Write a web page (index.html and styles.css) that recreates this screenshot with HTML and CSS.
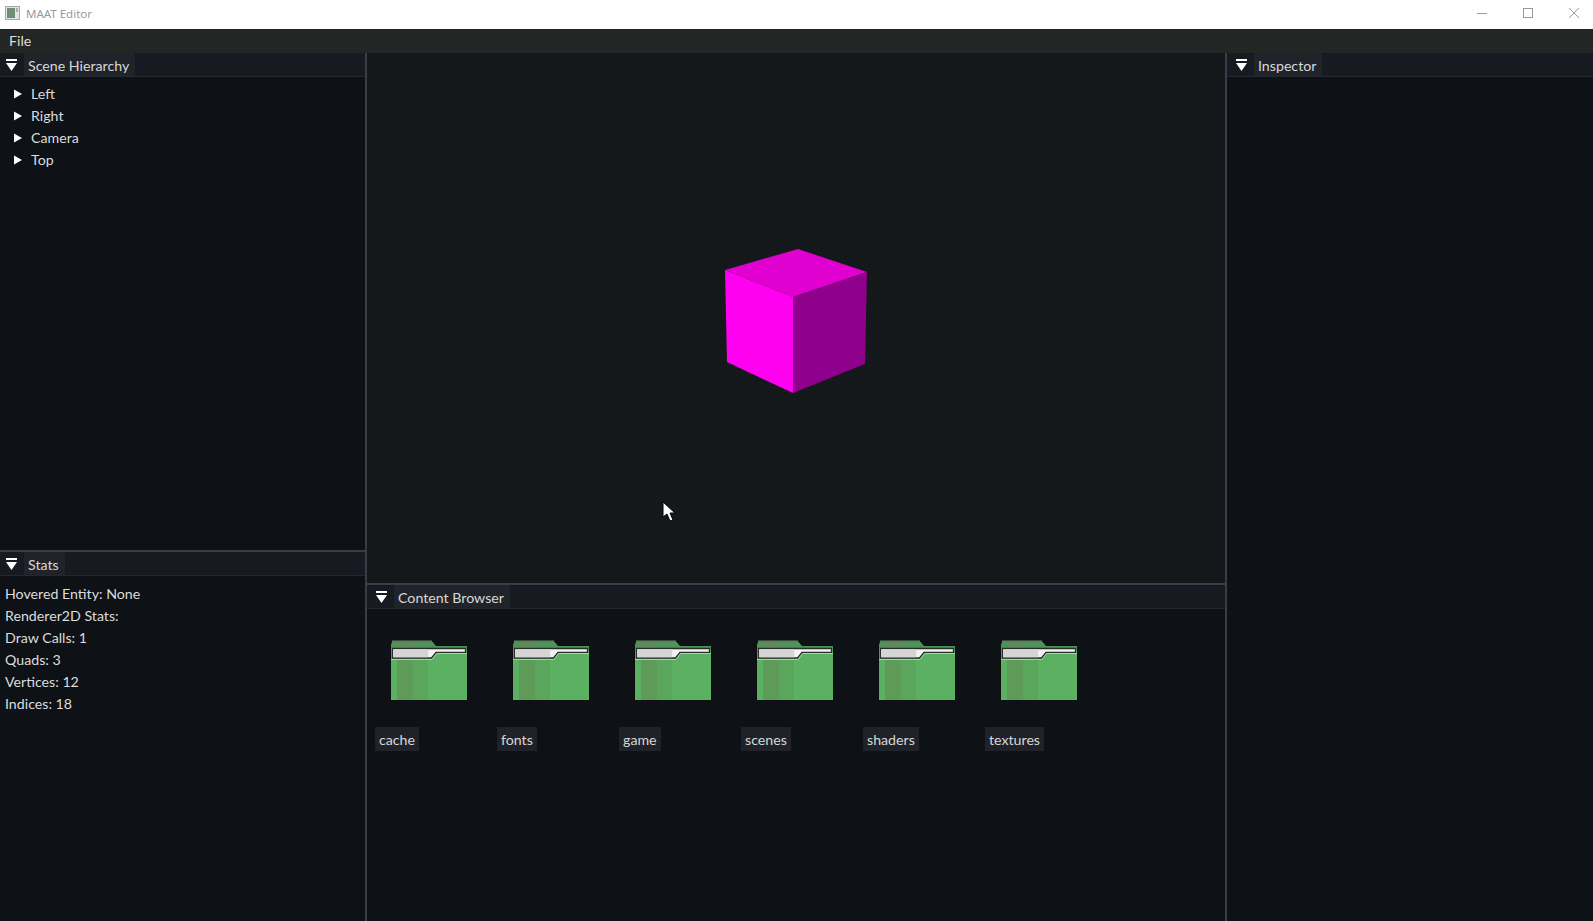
FILE: index.html
```html
<!DOCTYPE html>
<html lang="en">
<head>
  <meta charset="UTF-8">
  <title>MAAT Editor</title>
  <link rel="stylesheet" href="styles.css">
</head>
<body>

<svg class="defs">
  <defs>
    <symbol id="dock-arrow" viewBox="0 0 11 12">
      <rect x="0" y="0" width="11" height="2" fill="#fff"/>
      <polygon points="0,4 11,4 5.5,12" fill="#fff"/>
    </symbol>
    <symbol id="tree-arrow" viewBox="0 0 8 10">
      <polygon points="0,0.5 8,5 0,9.5" fill="#fff"/>
    </symbol>
    <symbol id="folder" viewBox="0 0 78 61">
      <path d="M0.5 60.5 V6 L2 1 H42 L46 6 H76 L77.5 8 V60.5 Z" fill="#5cb062" stroke="#0b0d0f"/>
      <path d="M2 1.5 H42 L46 6 H77 V9 H1 V6 Z" fill="#4f9456"/>
      <path d="M2 1 H42" stroke="#6d8a72" fill="none"/>
      <rect x="7" y="2" width="16" height="6" fill="#5f8a58"/>
      <rect x="7" y="20" width="16" height="40" fill="#5f9b58"/>
      <rect x="23" y="20" width="15" height="40" fill="#5aa65c"/>
      <path d="M2.5 8.5 H75.5 V12.5 H46 L41.5 18 H2.5 Z" fill="#f2f2f2" stroke="#262e29" stroke-width="1.3"/>
      <rect x="3.2" y="9.2" width="35" height="8.1" fill="#d6d4d7"/>
      <path d="M1 19.5 H42 L46.5 13.5 H77" fill="none" stroke="#a9d3ab"/>
    </symbol>
  </defs>
</svg>

<div class="titlebar">
  <svg class="app-icon" width="15" height="14" viewBox="0 0 15 14">
    <rect x="0.5" y="0.5" width="14" height="13" fill="#e4e4e4" stroke="#a8a8a8"/>
    <rect x="2" y="2" width="8" height="10" fill="#6f8f78"/>
    <rect x="11" y="2" width="2" height="4" fill="#a9adaa"/>
  </svg>
  <span class="app-name">MAAT Editor</span>
  <div class="win-controls">
    <svg width="12" height="12" viewBox="0 0 12 12"><path d="M1 6.5 H11" stroke="#9a9a9a"/></svg>
    <svg width="12" height="12" viewBox="0 0 12 12"><rect x="1.5" y="1.5" width="9" height="9" fill="none" stroke="#9a9a9a"/></svg>
    <svg width="12" height="12" viewBox="0 0 12 12"><path d="M1 1 L11 11 M11 1 L1 11" stroke="#9a9a9a"/></svg>
  </div>
</div>

<div class="menubar"><span class="menu-item">File</span></div>

<div class="workspace">
  <div class="col-left">
    <section class="panel scene-panel">
      <div class="panel-head">
        <svg class="dock-arrow"><use href="#dock-arrow"/></svg>
        <span class="tab">Scene Hierarchy</span>
      </div>
      <ul class="tree">
        <li><svg class="tree-arrow"><use href="#tree-arrow"/></svg>Left</li>
        <li><svg class="tree-arrow"><use href="#tree-arrow"/></svg>Right</li>
        <li><svg class="tree-arrow"><use href="#tree-arrow"/></svg>Camera</li>
        <li><svg class="tree-arrow"><use href="#tree-arrow"/></svg>Top</li>
      </ul>
    </section>
    <section class="panel stats-panel">
      <div class="panel-head">
        <svg class="dock-arrow"><use href="#dock-arrow"/></svg>
        <span class="tab">Stats</span>
      </div>
      <div class="stats">
        <p>Hovered Entity: None</p>
        <p>Renderer2D Stats:</p>
        <p>Draw Calls: 1</p>
        <p>Quads: 3</p>
        <p>Vertices: 12</p>
        <p>Indices: 18</p>
      </div>
    </section>
  </div>

  <div class="col-center">
    <div class="viewport">
      <svg class="scene" viewBox="0 0 858 530" width="858" height="530">
        <polygon points="431,196 358,217 426,244 500,219" fill="#e000d0"/>
        <polygon points="358,217 426,244 426,340 360,309" fill="#ff00f0"/>
        <polygon points="426,244 500,219 498,311 426,340" fill="#8f008c"/>
        <path d="M296 449 V464 L300 461 L303 468 L306 467 L303 460 L308 460 Z" fill="#fff" stroke="#000" stroke-width="1"/>
      </svg>
    </div>
    <section class="panel browser-panel">
      <div class="panel-head wide">
        <svg class="dock-arrow"><use href="#dock-arrow"/></svg>
        <span class="tab">Content Browser</span>
      </div>
      <div class="file-grid">
        <div class="file"><svg class="folder"><use href="#folder"/></svg><span class="file-name">cache</span></div>
        <div class="file"><svg class="folder"><use href="#folder"/></svg><span class="file-name">fonts</span></div>
        <div class="file"><svg class="folder"><use href="#folder"/></svg><span class="file-name">game</span></div>
        <div class="file"><svg class="folder"><use href="#folder"/></svg><span class="file-name">scenes</span></div>
        <div class="file"><svg class="folder"><use href="#folder"/></svg><span class="file-name">shaders</span></div>
        <div class="file"><svg class="folder"><use href="#folder"/></svg><span class="file-name">textures</span></div>
      </div>
    </section>
  </div>

  <div class="col-right">
    <section class="panel inspector-panel">
      <div class="panel-head wide">
        <svg class="dock-arrow"><use href="#dock-arrow"/></svg>
        <span class="tab">Inspector</span>
      </div>
    </section>
  </div>
</div>

</body>
</html>
```

FILE: styles.css
```css
* {
  box-sizing: border-box;
}
html, body {
  height: 100%;
}
body {
  margin: 0;
  display: flex;
  flex-direction: column;
  overflow: hidden;
  background: #0e1116;
  font-family: "Lato", sans-serif;
  font-size: 14.2px;
  color: #dcdcdc;
}
.defs {
  display: none;
}
.titlebar {
  height: 29px;
  flex: none;
  display: flex;
  align-items: center;
  padding-left: 5px;
  background: #fff;
}
.app-icon {
  margin-right: 6px;
  margin-top: -3px;
}
.app-name {
  font-family: "Noto Sans", sans-serif;
  font-size: 11.5px;
  color: #999;
  margin-top: -2px;
}
.win-controls {
  margin-left: auto;
  display: flex;
  gap: 34px;
  padding-right: 13px;
  margin-top: -3px;
}
.menubar {
  height: 24px;
  flex: none;
  display: flex;
  align-items: center;
  padding: 0 0 1px 9px;
  background: #242625;
}
.workspace {
  flex: 1;
  display: flex;
  min-height: 0;
}
.col-left {
  width: 367px;
  flex: none;
  display: flex;
  flex-direction: column;
  border-right: 2px solid #3a3d45;
}
.col-center {
  width: 858px;
  flex: none;
  display: flex;
  flex-direction: column;
}
.col-right {
  flex: 1;
  display: flex;
  border-left: 2px solid #3a3d45;
}
.panel {
  display: flex;
  flex-direction: column;
  background: #0e1116;
}
.scene-panel {
  height: 497px;
}
.stats-panel {
  flex: 1;
  border-top: 2px solid #3a3d45;
}
.browser-panel {
  flex: 1;
  border-top: 2px solid #3a3d45;
}
.inspector-panel {
  flex: 1;
}
.panel-head {
  height: 24px;
  flex: none;
  display: flex;
  align-items: flex-end;
  padding-left: 6px;
  background: #171b21;
  border-bottom: 1px solid #23272e;
}
.panel-head.wide {
  padding-left: 9px;
}
.dock-arrow {
  width: 11px;
  height: 12px;
  margin-right: 7px;
  margin-bottom: 5px;
}
.tab {
  height: 23px;
  padding: 0 6px 0 4px;
  line-height: 25px;
  background: #20242a;
  border-radius: 3px 3px 0 0;
  color: #d8d8d8;
}
.tree {
  list-style: none;
  margin: 0;
  padding: 6px 0 0 14px;
}
.tree li {
  height: 22px;
  line-height: 22px;
  display: flex;
  align-items: center;
}
.tree-arrow {
  width: 8px;
  height: 10px;
  margin-right: 9px;
}
.stats {
  padding: 7px 5px;
}
.stats p {
  margin: 0;
  height: 22px;
  line-height: 22px;
}
.viewport {
  height: 530px;
  flex: none;
  background: #14181b;
}
.scene {
  display: block;
}
.file-grid {
  display: flex;
  padding: 31px 0 0 8px;
}
.file {
  width: 122px;
  flex: none;
  display: flex;
  flex-direction: column;
  align-items: flex-start;
}
.folder {
  width: 78px;
  height: 61px;
  margin-left: 15px;
}
.file-name {
  height: 24px;
  line-height: 25px;
  margin-top: 26px;
  padding: 0 4px;
  background: #1f2228;
  color: #d8d8d8;
}
```
